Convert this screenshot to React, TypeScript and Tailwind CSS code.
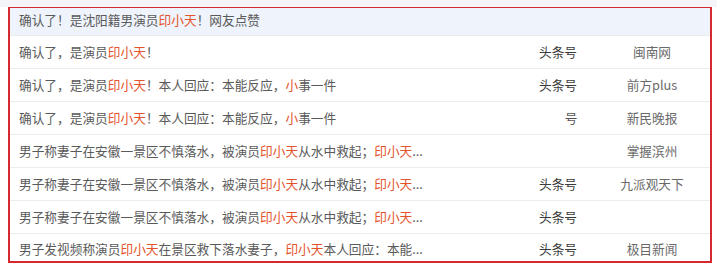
type Part = { t: string; hl?: boolean }

interface Row {
  title: Part[]
  source?: string
  sourceBlur?: boolean
  site?: string
}

const rows: Row[] = [
  {
    title: [{ t: "确认了！是沈阳籍男演员" }, { t: "印小天", hl: true }, { t: "！网友点赞" }],
  },
  {
    title: [{ t: "确认了，是演员" }, { t: "印小天", hl: true }, { t: "！" }],
    source: "头条号",
    site: "闽南网",
  },
  {
    title: [
      { t: "确认了，是演员" },
      { t: "印小天", hl: true },
      { t: "！本人回应：本能反应，" },
      { t: "小", hl: true },
      { t: "事一件" },
    ],
    source: "头条号",
    site: "前方plus",
  },
  {
    title: [
      { t: "确认了，是演员" },
      { t: "印小天", hl: true },
      { t: "！本人回应：本能反应，" },
      { t: "小", hl: true },
      { t: "事一件" },
    ],
    source: "号",
    sourceBlur: true,
    site: "新民晚报",
  },
  {
    title: [
      { t: "男子称妻子在安徽一景区不慎落水，被演员" },
      { t: "印小天", hl: true },
      { t: "从水中救起；" },
      { t: "印小天", hl: true },
      { t: "..." },
    ],
    site: "掌握滨州",
  },
  {
    title: [
      { t: "男子称妻子在安徽一景区不慎落水，被演员" },
      { t: "印小天", hl: true },
      { t: "从水中救起；" },
      { t: "印小天", hl: true },
      { t: "..." },
    ],
    source: "头条号",
    site: "九派观天下",
  },
  {
    title: [
      { t: "男子称妻子在安徽一景区不慎落水，被演员" },
      { t: "印小天", hl: true },
      { t: "从水中救起；" },
      { t: "印小天", hl: true },
      { t: "..." },
    ],
    source: "头条号",
  },
  {
    title: [
      { t: "男子发视频称演员" },
      { t: "印小天", hl: true },
      { t: "在景区救下落水妻子，" },
      { t: "印小天", hl: true },
      { t: "本人回应：本能..." },
    ],
    source: "头条号",
    site: "极目新闻",
  },
]

export default function App() {
  return (
    <div className="w-[717px] h-[264px] bg-white overflow-hidden font-['Microsoft_YaHei','Noto_Sans_CJK_SC',sans-serif] text-[12.7px]">
      <div className="h-[7px] bg-[#f4f5f8]" />
      <div className="ml-[8px] w-[704px] border-x-2 border-b-2 border-t border-[#d5282f]">
        {rows.map((row, i) => {
          const first = i === 0
          const last = i === rows.length - 1
          return (
            <div
              key={i}
              className={`flex items-center ${first ? "h-[28px] bg-[#eef3fc] pb-[3px]" : last ? "h-[27px] pt-[2px]" : "h-[33px] pb-[1px]"} ${last ? "" : "border-b border-[#ececec]"}`}
            >
              <div className="flex-1 pl-[9px] text-[#5a5a5a] whitespace-nowrap">
                {row.title.map((p, j) => (
                  <span key={j} className={p.hl ? "text-[#e5532b]" : ""}>
                    {p.t}
                  </span>
                ))}
              </div>
              <div className="w-[80px] text-center text-[#3a3a3a]">
                {row.sourceBlur ? (
                  <span className="pl-[26px] text-[#555]">{row.source}</span>
                ) : (
                  row.source
                )}
              </div>
              <div className="w-[100px] ml-[4px] mr-[8px] text-center text-[#6a6a6a]">{row.site}</div>
            </div>
          )
        })}
      </div>
    </div>
  )
}
